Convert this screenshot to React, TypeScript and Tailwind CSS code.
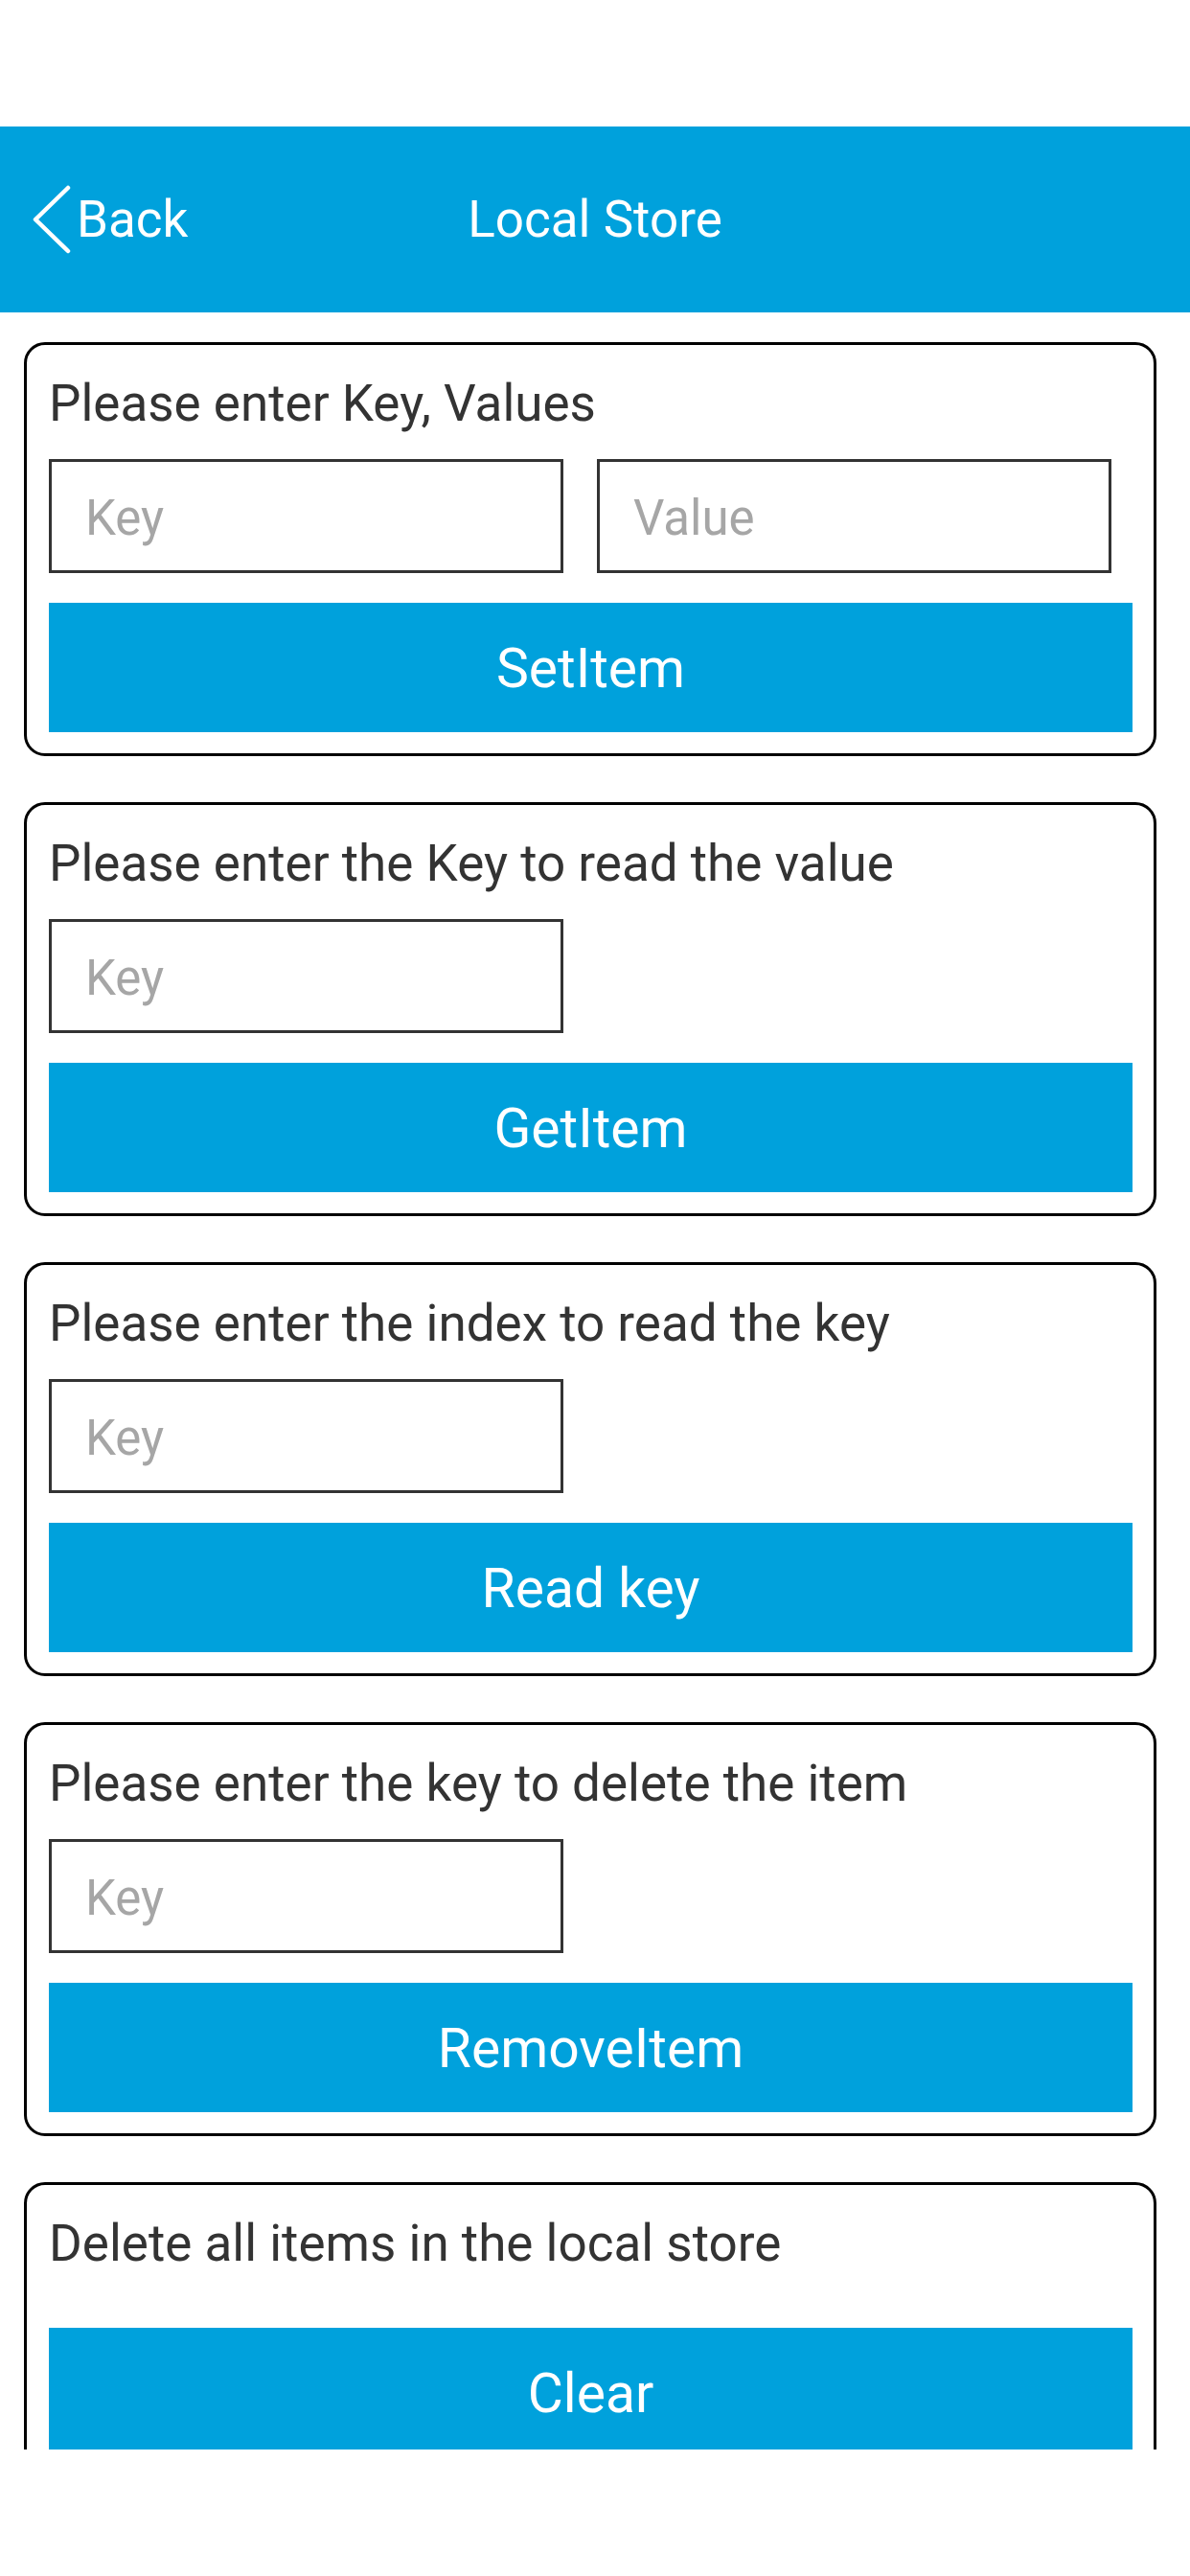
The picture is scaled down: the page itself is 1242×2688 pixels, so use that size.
import React from "react";

const font = { fontFamily: "Roboto, 'Noto Sans', sans-serif" };

function Card({
  title,
  inputs,
  button,
}: {
  title: string;
  inputs: string[];
  button: string;
}) {
  return (
    <div className="mb-[48px] w-[1182px] shrink-0 rounded-[22px] border-[3px] border-black bg-white px-[23px] pt-[31px] pb-[22px]">
      <div className="h-[60px] text-[53px] leading-[60px] text-[#333333] whitespace-nowrap">
        {title}
      </div>
      {inputs.length > 0 ? (
        <div className="mt-[28px] flex gap-[35px]">
          {inputs.map((p) => (
            <div
              key={p}
              className="flex h-[119px] w-[537px] items-center border-[3px] border-[#333333] bg-white pt-[5px] pl-[35px] text-[51px] text-[#a6a6a6]"
            >
              {p}
            </div>
          ))}
        </div>
      ) : null}
      <div
        className={
          (inputs.length > 0 ? "mt-[31px] " : "mt-[58px] ") +
          "flex h-[135px] w-[1131px] items-center justify-center bg-[#00a1dc] pt-[3px] text-[57px] text-white"
        }
      >
        {button}
      </div>
    </div>
  );
}

export default function App() {
  return (
    <div className="flex h-[2688px] w-[1242px] flex-col bg-white" style={font}>
      <div className="h-[132px] shrink-0" />
      <div className="relative flex h-[194px] shrink-0 items-center justify-center bg-[#00a1dc]">
        <div className="absolute left-[33px] top-0 flex h-full items-center">
          <svg width="42" height="72" viewBox="0 0 42 72" className="mr-[5px]">
            <path
              d="M38 3 L4 36 L38 69"
              fill="none"
              stroke="white"
              strokeWidth="4.5"
              strokeLinecap="round"
              strokeLinejoin="round"
            />
          </svg>
          <span className="text-[53px] leading-none text-white">Back</span>
        </div>
        <span className="text-[53px] leading-none text-white">Local Store</span>
      </div>
      <div className="h-[2230px] shrink-0 overflow-hidden pl-[25px] pt-[31px]">
        <div className="flex flex-col">
          <Card title="Please enter Key, Values" inputs={["Key", "Value"]} button="SetItem" />
          <Card title="Please enter the Key to read the value" inputs={["Key"]} button="GetItem" />
          <Card title="Please enter the index to read the key" inputs={["Key"]} button="Read key" />
          <Card title="Please enter the key to delete the item" inputs={["Key"]} button="RemoveItem" />
          <Card title="Delete all items in the local store" inputs={[]} button="Clear" />
        </div>
      </div>
    </div>
  );
}
